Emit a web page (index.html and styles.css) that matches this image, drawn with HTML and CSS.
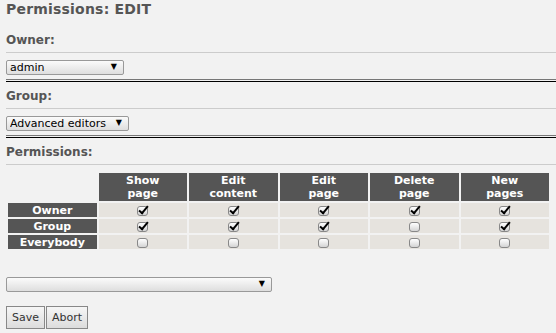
FILE: index.html
```html
<!DOCTYPE html>
<html lang="en">
<head>
  <meta charset="UTF-8">
  <title>Permissions: EDIT</title>
  <link rel="stylesheet" href="styles.css">
</head>
<body>
  <div class="page">
    <h1 class="title">Permissions: EDIT</h1>

    <div class="section">
      <h2 class="label">Owner:</h2>
      <div class="field">
        <span class="pick"><select class="sel sel-owner"><option>admin</option></select></span>
      </div>
    </div>

    <div class="section">
      <h2 class="label">Group:</h2>
      <div class="field">
        <span class="pick"><select class="sel sel-group"><option>Advanced editors</option></select></span>
      </div>
    </div>

    <div class="perms">
      <h2 class="label">Permissions:</h2>
      <table class="grid">
        <tr>
          <th class="blank"></th>
          <th>Show<br>page</th>
          <th>Edit<br>content</th>
          <th>Edit<br>page</th>
          <th>Delete<br>page</th>
          <th>New<br>pages</th>
        </tr>
        <tr>
          <th class="who">Owner</th>
          <td><input type="checkbox" class="cb" checked></td>
          <td><input type="checkbox" class="cb" checked></td>
          <td><input type="checkbox" class="cb" checked></td>
          <td><input type="checkbox" class="cb" checked></td>
          <td><input type="checkbox" class="cb" checked></td>
        </tr>
        <tr>
          <th class="who">Group</th>
          <td><input type="checkbox" class="cb" checked></td>
          <td><input type="checkbox" class="cb" checked></td>
          <td><input type="checkbox" class="cb" checked></td>
          <td><input type="checkbox" class="cb"></td>
          <td><input type="checkbox" class="cb" checked></td>
        </tr>
        <tr>
          <th class="who">Everybody</th>
          <td><input type="checkbox" class="cb"></td>
          <td><input type="checkbox" class="cb"></td>
          <td><input type="checkbox" class="cb"></td>
          <td><input type="checkbox" class="cb"></td>
          <td><input type="checkbox" class="cb"></td>
        </tr>
      </table>
    </div>

    <div class="extra">
      <span class="pick"><select class="sel sel-wide"><option></option></select></span>
    </div>

    <div class="actions"><button class="btn" type="button">Save</button><button class="btn" type="button">Abort</button></div>
  </div>
</body>
</html>
```

FILE: styles.css
```css
body {
  margin: 0;
  padding: 0;
  background-color: #f2f2f2;
  font-family: 'DejaVu Sans', Verdana, sans-serif;
  color: #555;
}
.page {
  padding: 1px 0 0 6px;
}
.title {
  margin: 0 0 8px;
  font-size: 14px;
  line-height: 17px;
  font-weight: bold;
  letter-spacing: 0.2px;
  color: #555;
}
.section {
  padding-bottom: 1px;
  border-bottom: 1px solid #000;
}
.label {
  margin: 0;
  padding: 7px 0 4px;
  font-size: 12px;
  line-height: 15px;
  font-weight: bold;
  color: #555;
  border-bottom: 1px solid #ccc;
}
.field {
  display: flex;
  margin-top: 7px;
  padding-bottom: 4px;
  border-bottom: 1px solid #777;
}
.pick {
  position: relative;
  display: block;
}
.pick::after {
  content: "\25BC";
  position: absolute;
  right: 7px;
  top: 3px;
  font-size: 8px;
  line-height: 8px;
  color: #000;
  pointer-events: none;
}
.sel {
  display: block;
  -webkit-appearance: none;
  appearance: none;
  height: 15px;
  margin: 0;
  padding: 0 0 0 3px;
  border: 1px solid #999;
  border-radius: 2px;
  background: linear-gradient(#fbfbfb, #dedede);
  font-family: 'DejaVu Sans', Verdana, sans-serif;
  font-size: 11px;
  line-height: 13px;
  color: #000;
}
.sel-owner {
  width: 118px;
}
.sel-group {
  width: 123px;
}
.sel-wide {
  width: 266px;
}
.grid {
  margin-top: 6px;
  width: 545px;
  border-spacing: 2px;
  table-layout: fixed;
  font-size: 11px;
}
.grid th {
  background-color: #555;
  color: #fff;
  font-weight: bold;
  text-align: center;
  padding: 1px 0;
  line-height: 13px;
}
.grid th.blank {
  background: transparent;
}
.grid th.who {
  padding: 0;
  height: 14px;
}
.grid td {
  background-color: #e6e3de;
  text-align: center;
  padding: 0;
  height: 14px;
  line-height: 0;
}
.cb {
  -webkit-appearance: none;
  appearance: none;
  position: relative;
  width: 11px;
  height: 10px;
  margin: 2px 0 0;
  border: 1px solid #888;
  border-radius: 3px;
  background: linear-gradient(#fff, #d4d4d4);
  vertical-align: top;
}
.cb:checked::after {
  content: "";
  position: absolute;
  left: 3px;
  top: -3px;
  width: 3px;
  height: 8px;
  border-right: 2px solid #000;
  border-bottom: 2px solid #000;
  transform: rotate(40deg);
}
.extra {
  display: flex;
  margin-top: 26px;
}
.actions {
  display: flex;
  margin-top: 14px;
}
.btn {
  height: 23px;
  margin: 0;
  padding: 0 5px;
  border: 1px solid #888;
  border-radius: 0;
  background: linear-gradient(#f6f6f6, #dcdcdc);
  font-family: 'DejaVu Sans', Verdana, sans-serif;
  font-size: 11px;
  color: #333;
}
.btn + .btn {
  margin-left: 1px;
}
```
